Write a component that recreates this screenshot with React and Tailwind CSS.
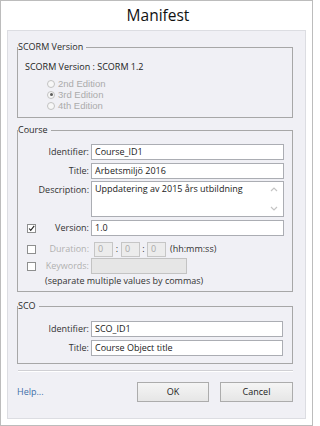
const font = "font-['Open_Sans','Liberation_Sans',Arial,sans-serif]";

const Radio = ({ label, checked }) => (
  <div className="flex items-center h-[11px] pl-[29px] gap-[3px]">
    <span className="w-[8px] h-[8px] rounded-full border border-[#c2c2c2] bg-[#f7f7f7] flex items-center justify-center">
      {checked && <span className="w-[3px] h-[3px] rounded-full bg-[#5c5c5c]" />}
    </span>
    <span className="font-['Liberation_Sans',Arial,sans-serif] text-[9.5px] text-[#ababab] leading-[11px]">{label}</span>
  </div>
);

const Check = ({ checked }) => (
  <span className="w-[9px] h-[9px] border border-[#8e8f8f] bg-white flex items-center justify-center shrink-0">
    {checked && (
      <svg width="9" height="9" viewBox="0 0 9 9">
        <path d="M1.5 4.5 L3.5 6.8 L8 1.2" fill="none" stroke="#222" strokeWidth="1.4" />
      </svg>
    )}
  </span>
);

const Row = ({ label, check, checked, disabled, className = '', children }) => (
  <div className={`flex items-center ${className}`}>
    <div className="w-[73px] flex items-center pr-[2px]">
      {check ? <span className="ml-[9px]"><Check checked={checked} /></span> : null}
      <span className={`ml-auto ${disabled ? 'text-[#b0b0b0]' : 'text-[#333]'}`}>{label}</span>
    </div>
    {children}
  </div>
);

const Input = ({ value, w = 'w-[193px]' }) => (
  <div className={`${w} h-[16px] border border-[#abadb3] bg-white px-[3px] flex items-center text-[#1a1a1a]`}>{value}</div>
);

const TimeBox = () => (
  <div className="w-[19px] h-[15px] border border-[#c6c6c6] bg-[#ececec] px-[3px] flex items-center text-[#a8a8a8]">0</div>
);

const Box = ({ title, className = '', children }) => (
  <fieldset className={`w-[276px] border border-[#a7a7a7] ${className}`}>
    <legend className="pr-[3px] leading-[12px] text-[#2a2a2a]">{title}</legend>
    {children}
  </fieldset>
);

export default function App() {
  return (
    <div className={`w-[313px] h-[426px] bg-white border border-[#bcbcbc] flex flex-col ${font} text-[9px]`}>
      <div className="h-[29px] flex items-center justify-center pl-[3px]">
        <h1 className="text-[15.5px] text-[#111] leading-none">Manifest</h1>
      </div>

      <div className="mx-[6px] h-[389px] border border-[#dcdde2] bg-[#f0f0f5] pl-[9px] pt-[10px]">
        <Box title="SCORM Version" className="pb-[6px]">
          <div className="mt-[8px] pl-[7px] leading-[12px] text-[#222]">SCORM Version : SCORM 1.2</div>
          <div className="mt-[5px]">
            <Radio label="2nd Edition" />
            <Radio label="3rd Edition" checked />
            <Radio label="4th Edition" />
          </div>
        </Box>

        <Box title="Course" className="mt-[6px] pb-[4px]">
          <Row label="Identifier:" className="mt-[8px]">
            <Input value="Course_ID1" />
          </Row>
          <Row label="Title:" className="mt-[3px]">
            <Input value="Arbetsmiljö 2016" />
          </Row>
          <div className="flex mt-[2px]">
            <div className="w-[73px] pr-[2px] pt-[2px] text-right text-[#333]">Description:</div>
            <div className="w-[193px] h-[36px] border border-[#abadb3] bg-white flex">
              <div className="flex-1 px-[3px] pt-[1px] text-[#1a1a1a] leading-[12px]">Uppdatering av 2015 års utbildning</div>
              <div className="w-[16px] flex flex-col items-center justify-between py-[5px] pr-[2px]">
                <svg width="8" height="5" viewBox="0 0 8 5"><path d="M1 4 L4 1 L7 4" fill="none" stroke="#c4c4c4" strokeWidth="1.2" /></svg>
                <svg width="8" height="5" viewBox="0 0 8 5"><path d="M1 1 L4 4 L7 1" fill="none" stroke="#c4c4c4" strokeWidth="1.2" /></svg>
              </div>
            </div>
          </div>
          <Row label="Version:" check checked className="mt-[3px]">
            <Input value="1.0" />
          </Row>
          <Row label="Duration:" check disabled className="mt-[5px] h-[16px]">
            <div className="flex items-center ml-[3px] text-[#333]">
              <TimeBox />
              <span className="w-[8px] text-center">:</span>
              <TimeBox />
              <span className="w-[7px] text-center">:</span>
              <TimeBox />
              <span className="ml-[4px]">(hh:mm:ss)</span>
            </div>
          </Row>
          <Row label="Keywords:" check disabled className="mt-[1px]">
            <div className="w-[96px] h-[16px] border border-[#c3c3c3] bg-[#e6e6e6]" />
          </Row>
          <div className="pl-[27px] leading-[12px] mt-[1px] text-[#333]">(separate multiple values by commas)</div>
        </Box>

        <Box title="SCO" className="mt-[8px] pb-[7px]">
          <Row label="Identifier:" className="mt-[9px]">
            <Input value="SCO_ID1" w="w-[192px]" />
          </Row>
          <Row label="Title:" className="mt-[3px]">
            <Input value="Course Object title" w="w-[192px]" />
          </Row>
        </Box>

        <div className="w-[275px] ml-[1px] mt-[6px] border-t border-[#d0d0d4] border-b border-b-white" />

        <div className="w-[276px] flex items-center mt-[10px]">
          <a className="text-[#3d6fa8]">Help...</a>
          <button className="ml-auto w-[72px] h-[20px] border border-[#acacac] bg-gradient-to-b from-[#f5f5f5] to-[#e6e6e6] text-[#222]">OK</button>
          <button className="ml-[11px] w-[73px] h-[20px] border border-[#acacac] bg-gradient-to-b from-[#f5f5f5] to-[#e6e6e6] text-[#222]">Cancel</button>
        </div>
      </div>
    </div>
  );
}
